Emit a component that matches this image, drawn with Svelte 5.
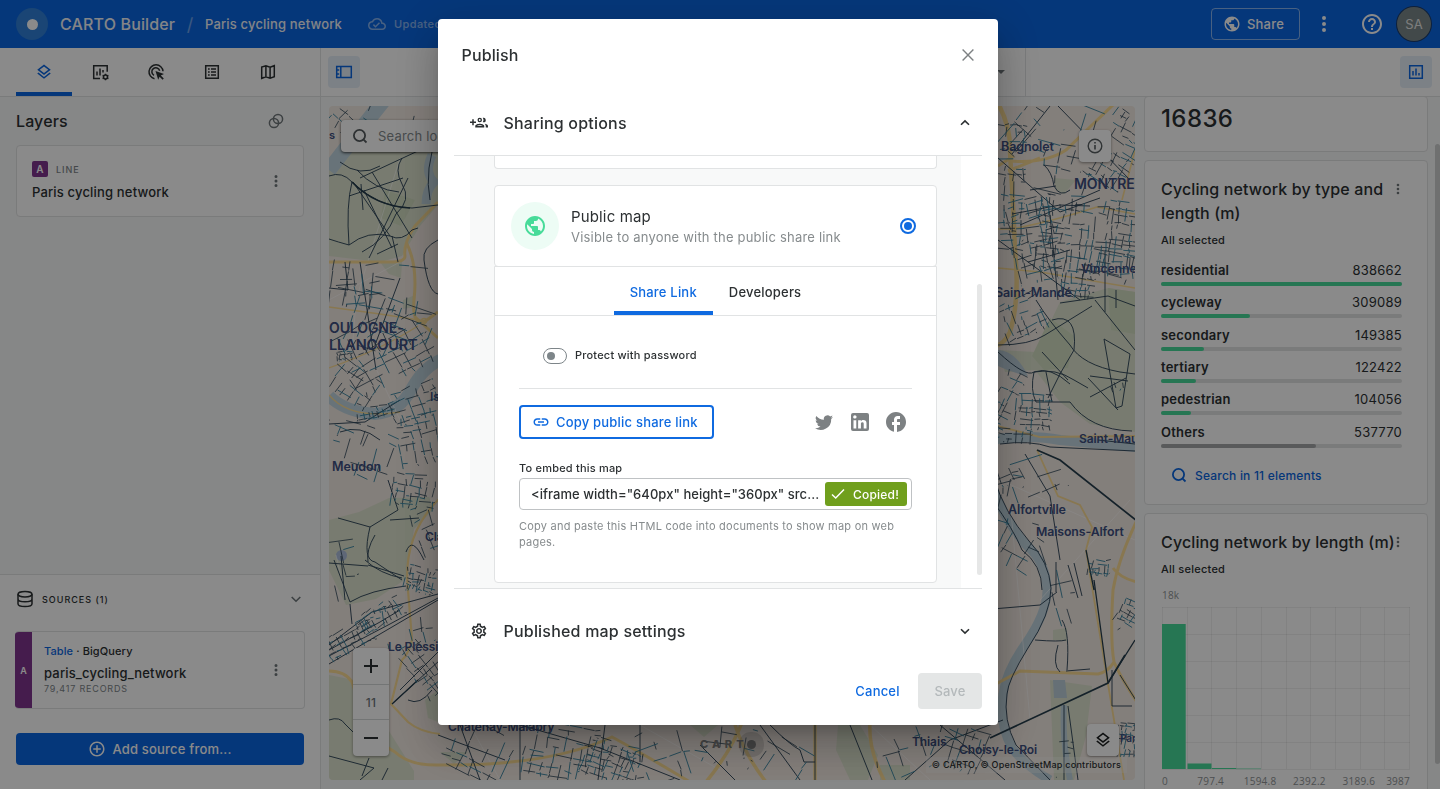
<script>
  const tabs = ['layers', 'widgets', 'interactions', 'legend', 'basemaps'];

  const categories = [
    { name: 'residential', value: 838662, share: 100 },
    { name: 'cycleway', value: 309089, share: 36.9 },
    { name: 'secondary', value: 149385, share: 17.8 },
    { name: 'tertiary', value: 122422, share: 14.6 },
    { name: 'pedestrian', value: 104056, share: 12.4 },
    { name: 'Others', value: 537770, share: 64.2, other: true }
  ];

  const axis = ['0', '797.4', '1594.8', '2392.2', '3189.6', '3987'];

  // Deterministic pseudo-random source so the street texture is stable.
  let seed = 7321;
  function rnd() {
    seed = (seed * 16807) % 2147483647;
    return seed / 2147483647;
  }

  let dark = '';
  let teal = '';

  // A rotated block of streets: [centre x, centre y, width, height, angle, step, density]
  function block([cx, cy, w, h, deg, step, density]) {
    const a = (deg * Math.PI) / 180;
    const ca = Math.cos(a);
    const sa = Math.sin(a);
    const p = (x, y) => `${(cx + x * ca - y * sa).toFixed(1)} ${(cy + x * sa + y * ca).toFixed(1)}`;
    for (const flip of [false, true]) {
      const W = flip ? h : w;
      const H = flip ? w : h;
      for (let x = -W / 2; x <= W / 2; x += step * (0.6 + rnd() * 0.8)) {
        let y = -H / 2 + rnd() * step;
        while (y < H / 2) {
          const len = step * (0.5 + rnd() * 1.9);
          const end = Math.min(y + len, H / 2);
          if (rnd() < density) {
            const bend = (rnd() - 0.5) * 3.2;
            const seg = flip ? `M${p(y, x)}L${p(end, x + bend)}` : `M${p(x, y)}L${p(x + bend, end)}`;
            if (rnd() < 0.58) dark += seg;
            else teal += seg;
          }
          y = end + rnd() * step * 0.25;
        }
      }
    }
  }

  [
    [348, 122, 34, 26, 40, 7, 0.6], [400, 112, 60, 14, 15, 9, 0.4],
    [383, 287, 104, 48, 8, 12, 0.5], [358, 286, 44, 40, -4, 9, 0.45], [385, 350, 90, 66, -28, 10, 0.6], [352, 383, 50, 34, 35, 8, 0.6],
    [345, 356, 16, 9, -6, 3, 0.7], [390, 330, 80, 60, 20, 15, 0.5],
    [376, 412, 38, 12, -10, 5, 0.7], [415, 404, 50, 34, -20, 8, 0.65], [350, 430, 46, 20, 20, 12, 0.5], [362, 452, 62, 50, 18, 12, 0.5],
    [420, 440, 44, 50, -12, 8, 0.65], [414, 492, 44, 34, 8, 5.5, 0.7], [428, 530, 24, 50, -20, 8, 0.5], [421, 580, 32, 26, 12, 4.5, 0.6],
    [380, 616, 50, 20, -30, 5, 0.65], [350, 640, 50, 24, -28, 6, 0.6], [424, 668, 28, 60, -38, 7, 0.65],
    [345, 570, 26, 60, -10, 15, 0.3], [410, 625, 50, 40, -10, 12, 0.4],
    [1020, 122, 60, 36, -50, 14, 0.45], [1010, 190, 30, 130, 2, 7, 0.6], [1118, 150, 42, 76, 30, 7, 0.68], [1080, 120, 70, 30, 20, 16, 0.4],
    [1062, 170, 60, 50, 12, 12, 0.45], [1088, 236, 100, 76, 6, 6.5, 0.62], [1100, 265, 70, 30, 10, 9, 0.6], [1036, 240, 48, 84, -12, 7, 0.6],
    [1078, 285, 34, 26, 7, 5.5, 0.7], [1022, 318, 44, 40, -25, 7, 0.68], [1034, 412, 36, 36, 2, 6, 0.7],
    [1006, 400, 20, 60, 25, 6, 0.65], [1012, 436, 40, 14, 5, 7, 0.65], [1020, 545, 40, 50, 28, 10, 0.5],
    [1060, 580, 22, 90, -15, 12, 0.4], [1099, 568, 22, 16, 5, 4, 0.6], [1128, 615, 20, 36, 30, 5, 0.65],
    [1127, 740, 18, 34, 2, 4.5, 0.65], [1008, 476, 18, 26, 70, 7, 0.6], [1040, 475, 60, 40, -20, 16, 0.3],
    [1010, 500, 20, 50, 15, 8, 0.45], [1118, 386, 14, 10, -20, 3.5, 0.5],
    [560, 752, 70, 56, 12, 8, 0.65], [612, 762, 56, 40, 18, 5.5, 0.65], [660, 756, 60, 52, -18, 12, 0.5],
    [480, 752, 70, 52, 25, 11, 0.5], [725, 745, 60, 40, 10, 12, 0.4], [782, 752, 60, 50, 30, 13, 0.4],
    [900, 752, 50, 50, -20, 12, 0.5], [960, 748, 50, 44, 20, 9, 0.6], [1065, 760, 16, 36, 2, 8, 0.35]
  ].forEach(block);

  const places = [
    [329, 139, 's', 11], [329, 333, 'OULOGNE-', 14], [329, 350, 'LLANCOURT', 14.5], [332, 471, 'Meudon', 12.5],
    [425, 541, 'Clamart', 12], [388, 651, 'Le Plessis', 12], [430, 401, 'Issy', 12], [448, 731, 'Châtenay-Malabry', 12],
    [912, 746, 'Thiais', 12], [959, 754, 'Choisy-le-Roi', 12], [1001, 151, 'Bagnolet', 12.500], [1074, 189, 'MONTRE', 14],
    [1081, 273, 'Vincenne', 12.3], [995, 297, 'Saint-Mandé', 12.500], [1079, 443, 'Saint-Mau', 12],
    [1008, 514, 'Alfortville', 12.500], [1036, 536, 'Maisons-Alfort', 12.300], [1120, 742, 'Par', 10]
  ];
</script>

{#snippet dots(size = 18)}
  <svg class="ic" width={size} height={size} viewBox="0 0 24 24"><path d="M12 8a2 2 0 1 0 0-4 2 2 0 0 0 0 4zm0 2a2 2 0 1 0 0 4 2 2 0 0 0 0-4zm0 6a2 2 0 1 0 0 4 2 2 0 0 0 0-4z" /></svg>
{/snippet}

{#snippet globe(size)}
  <svg class="ic" width={size} height={size} viewBox="0 0 24 24"><path d="M12 2C6.48 2 2 6.48 2 12s4.48 10 10 10 10-4.48 10-10S17.52 2 12 2zm-1 17.93c-3.95-.49-7-3.85-7-7.93 0-.62.08-1.21.21-1.79L9 15v1c0 1.1.9 2 2 2v1.930zm6.900-2.540c-.26-.81-1-1.390-1.900-1.390h-1v-3c0-.55-.45-1-1-1H8v-2h2c.55 0 1-.45 1-1V7h2c1.100 0 2-.9 2-2v-.41c2.930 1.190 5 4.060 5 7.410 0 2.080-.8 3.970-2.100 5.390z" /></svg>
{/snippet}

{#snippet search(size)}
  <svg class="ic line" width={size} height={size} viewBox="0 0 18 18" stroke-width="1.800"><circle cx="8.500" cy="8.500" r="5.600" /><path d="M12.600 12.600 15.500 15.500" /></svg>
{/snippet}

{#snippet layersIcon(size)}
  <svg class="ic" width={size} height={size} viewBox="0 0 24 24"><path d="m11.990 18.540-7.370-5.730L3 14.070l9 7 9-7-1.630-1.270-7.380 5.740zM12 16l7.360-5.730L21 9l-9-7-9 7 1.630 1.270L12 16zm0-11.470L17.740 9 12 13.470 6.260 9 12 4.530z" /></svg>
{/snippet}

<div class="app">
  <header class="top">
    <div class="logo"><i></i></div>
    <span class="product">CARTO Builder</span>
    <span class="slash">/</span>
    <span class="doc">Paris cycling network</span>
    <span class="saved">
      <svg class="ic" width="18" height="18" viewBox="0 0 24 24"><path d="M19.350 10.040A7.490 7.490 0 0 0 12 4C9.110 4 6.600 5.640 5.350 8.040A5.994 5.994 0 0 0 0 14c0 3.310 2.690 6 6 6h13c2.760 0 5-2.240 5-5 0-2.640-2.050-4.780-4.650-4.960zM19 18H6c-2.210 0-4-1.790-4-4 0-2.050 1.530-3.760 3.560-3.970l1.070-.11.5-.95A5.469 5.469 0 0 1 12 6c2.620 0 4.880 1.860 5.390 4.430l.3 1.500 1.530.11A2.980 2.980 0 0 1 22 15c0 1.650-1.350 3-3 3zm-9-3.820-2.090-2.090L6.500 13.500 10 17l6.010-6.010-1.410-1.410z" /></svg>
      Updated just now
    </span>
    <div class="right">
      <button class="share">{@render globe(18)}Share</button>
      <span class="more">{@render dots(24)}</span>
      <svg class="ic help" width="24" height="24" viewBox="0 0 24 24"><path d="M11 18h2v-2h-2v2zm1-16C6.480 2 2 6.480 2 12s4.480 10 10 10 10-4.480 10-10S17.520 2 12 2zm0 18c-4.410 0-8-3.590-8-8s3.590-8 8-8 8 3.590 8 8-3.590 8-8 8zm0-14c-2.210 0-4 1.790-4 4h2c0-1.100.9-2 2-2s2 .9 2 2c0 2-3 1.750-3 5h2c0-2.250 3-2.500 3-5 0-2.210-1.790-4-4-4z" /></svg>
      <span class="avatar">SA</span>
    </div>
  </header>

  <div class="body">
    <aside class="side">
      <nav>
        {#each tabs as tab, i}
          <span class="tab" class:active={i === 0}>
            {#if tab === 'layers'}
              {@render layersIcon(18)}
            {:else if tab === 'widgets'}
              <svg class="ic line" width="18" height="18" viewBox="0 0 18 18" stroke-width="1.500"><path d="M9 15.500H2.700V2.700h13.500v6M6 8.500v4M9 5.500v7M12 7v2.500" /><circle cx="14.500" cy="14" r="2" /><path d="M14.500 10.700v1.300M14.500 16v1.300M11.600 12.400l1.200.6M16.200 15l1.200.6M11.600 15.600l1.200-.6M16.200 13l1.200-.6" stroke-width="1.400" /></svg>
            {:else if tab === 'interactions'}
              <svg class="ic line" width="18" height="18" viewBox="0 0 18 18" stroke-width="1.500"><path d="M7.500 15.700A7 7 0 1 1 16 8.300M7 12.300A4 4 0 1 1 12.700 7.700" /><path d="M8.500 8l8.500 3-3.200 1.500 3 3-1.200 1.200-3-3-1.400 3z" fill="currentColor" stroke="none" /></svg>
            {:else if tab === 'legend'}
              <svg class="ic line" width="18" height="18" viewBox="0 0 18 18" stroke-width="1.500"><path d="M2.700 2.700h12.600v12.600H2.700zM5 6h1.700M8 6h5M5 9h1.700M8 9h5M5 12h1.700M8 12h5" /></svg>
            {:else}
              <svg class="ic line" width="18" height="18" viewBox="0 0 18 18" stroke-width="1.500"><path d="M2.700 4v11.300l4.200-1.600 4.200 1.600 4.200-1.600V2.700l-4.200 1.600-4.200-1.600zM6.900 2.700v11M11.100 4.300v11" /></svg>
            {/if}
          </span>
        {/each}
      </nav>

      <div class="layers">
        <div class="heading">
          <h2>Layers</h2>
          <svg class="ic line" width="18" height="18" viewBox="0 0 18 18" stroke-width="1.500"><circle cx="11" cy="7" r="4.600" /><circle cx="7" cy="11" r="4.600" /></svg>
        </div>
        <div class="layer card">
          <div>
            <div class="kind"><b>A</b><span>LINE</span></div>
            <div class="name">Paris cycling network</div>
          </div>
          {@render dots()}
        </div>
      </div>

      <div class="sources">
        <div class="srchead">
          <svg class="ic line" width="18" height="18" viewBox="0 0 18 18" stroke-width="1.500"><ellipse cx="9" cy="4.200" rx="7" ry="2.700" /><path d="M2 4.200v9.600c0 1.600 3 2.800 7 2.800s7-1.200 7-2.800V4.200M2 9c0 1.600 3 2.800 7 2.800S16 10.600 16 9" /></svg>
          <span>SOURCES (1)</span>
          <svg class="ic line" width="18" height="18" viewBox="0 0 18 18" stroke-width="1.600"><path d="M4.700 7 9 11.200 13.300 7" /></svg>
        </div>
        <div class="source card">
          <b>A</b>
          <div>
            <div class="origin"><em>Table</em> · BigQuery</div>
            <div class="name">paris_cycling_network</div>
            <div class="records">79,417 RECORDS</div>
          </div>
          {@render dots()}
        </div>
        <button class="add">
          <svg class="ic" width="18" height="18" viewBox="0 0 24 24"><path d="M13 7h-2v4H7v2h4v4h2v-4h4v-2h-4V7zm-1-5C6.480 2 2 6.480 2 12s4.480 10 10 10 10-4.480 10-10S17.520 2 12 2zm0 18c-4.410 0-8-3.590-8-8s3.590-8 8-8 8 3.590 8 8-3.590 8-8 8z" /></svg>
          Add source from...
        </button>
      </div>
    </aside>

    <main>
      <div class="toolbar">
        <span class="tool"><svg class="ic line" width="18" height="18" viewBox="0 0 18 18" stroke-width="1.500"><path d="M1.700 3.500h14.600v11H1.700zM5.800 3.500v11M1.700 7h2.500M1.700 11h2.500" /></svg></span>
        <span class="picker"><i></i></span>
        <span class="tool end"><svg class="ic line" width="18" height="18" viewBox="0 0 18 18" stroke-width="1.500"><path d="M2.700 2.700h12.600v12.600H2.700zM6 8v4.500M9 5.500v7M12 10v2.500" /></svg></span>
      </div>

      <div class="work">
        <div class="map">
          <svg class="tiles" viewBox="329 106 806 674" width="806" height="674">
            <rect x="329" y="106" width="806" height="674" fill="#f3eae3" />
            <g fill="#dee4cf">
              <path d="M329 165 360 140 438 128V205L420 226 402 256 380 262 329 256z" />
              <path d="M380 262l22 0-1 16-12-4zM329 520l30-8 30-14 40-1 5 12-20 20-8 50-30 20-30 6-22-45-25 5zM329 675l30 6 30 50 25 40v9h-85z" />
              <path d="M1108 288 1135 292V432L1090 424 1060 402 1035 370 1005 372 998 350 1036 352 1060 302z" />
              <path d="M1054 178l22 2-12 14-8-4zM1053 630l14-2v13l-14-1zM1050 680l42 6-6 50-12 44h-20zM838 725h22l18 30-10 25h-18l-14-30zM440 752l28 0-14 12zM690 725l28 0-14 12zM880 765h30v15h-30z" />
              <path d="M425 700l13-10v32l-10-4zM403 300l12-5v12l-12 2z" />
            </g>
            <path d="M1050 318l24 18-6 32-24 2-12-14zM1108 288l27 4v42l-24-4zM385 190l30 10-14 26-20-8z" fill="#d3dec2" />
            <g fill="none" stroke="#c0d5df">
              <path d="M329 170Q352 140 384 100" stroke-width="15" />
              <path d="M329 396Q345 412 375 414Q400 412 412 388Q425 365 445 358" stroke-width="12" />
              <path d="M432 155Q424 172 434 182Q426 190 426 204" stroke-width="9" />
              <path d="M990 440Q1030 434 1060 440L1135 447" stroke-width="10" />
              <path d="M990 478Q1000 515 1026 545Q1046 562 1047 588Q1048 612 1024 646Q1006 672 1003 694Q998 722 1012 748Q1024 765 1050 780" stroke-width="9" />
              <path d="M1064 705Q1062 740 1070 780" stroke-width="6" />
            </g>
            <path d="M998 350Q1015 350 1028 376Q1010 372 998 366zM1053 680h12l2 18h-13z" fill="#bccfdb" />
            <circle cx="341.500" cy="555.500" r="5.500" fill="#aebfdd" />
            <g fill="none" stroke="#fff" opacity=".55" stroke-width="1">
              <path d="M400 158 369 258 356 300 350 380M329 300 400 262M1000 480 1135 540M1040 600 1130 500M1010 500 1030 720M336 555 346 598M372 360 400 420M470 725 500 780M870 725 930 780M640 725 720 770" />
            </g>
            <g fill="none" stroke="#fbdc94" stroke-width="3">
              <path d="M996 100Q1011 125 1010 152Q1014 220 1015 250Q1020 300 1010 332Q1004 344 996 346" stroke-width="4.500" />
              <path d="M1114 104 1092 125 1066 150Q1045 164 1010 161M998 166 1014 156M1008 171 1040 158" />
              <path d="M329 262H390Q405 262 405 256Q403 244 415 226L438 202" />
              <path d="M406 242Q418 265 414 300Q412 325 424 322L438 312M414 316 438 338" />
              <path d="M329 307 380 314 425 321M329 368Q380 350 418 326M329 395Q350 420 400 412" stroke-width="1.300" />
              <path d="M440 498Q402 535 408 590L412 640Q408 655 402 660L391 704 408 722Q420 732 440 734" stroke-width="2.200" />
              <path d="M329 671Q345 671 352 682Q370 740 395 752Q410 766 440 765Q550 766 612 737Q640 752 690 782" />
              <path d="M743 720Q732 750 706 782M735 725Q745 755 766 782M815 722V782M870 722Q868 750 885 782" stroke-width="3.500" />
              <path d="M998 229H1012Q1050 222 1097 207L1135 214M998 268 1040 272 1135 288M1135 150 1122 200" stroke-width="1.600" />
              <path d="M1137 520Q1118 560 1113 590Q1110 640 1114 662Q1122 680 1137 702M1113 568Q1120 578 1137 582M996 684 1020 671 1098 674Q1108 672 1114 662" />
              <path d="M990 424 1040 437 1135 436M1037 450 1058 496 1080 505 1092 527 1086 550 1108 684 1124 780" stroke-width="1.800" />
              <circle cx="1012.500" cy="229" r="3" stroke-width="1.300" />
              <circle cx="424" cy="321" r="2.500" stroke-width="1.300" />
            </g>
            <g fill="none" stroke="#2f4658" stroke-width=".95">
              <path d="M329 176Q342 171 352 182Q346 205 349 245Q338 242 329 239M352 182Q378 208 412 208L438 205M349 245Q368 230 390 236Q402 242 412 230L418 228M369 258 408 178M353 182 390 236M364 190 392 248M349 196 403 178M402 158Q394 170 402 184Q412 200 396 214Q386 240 362 252M357 170Q375 190 399 192M340 162Q360 178 380 166M372 172 412 238M360 178 420 150M377 254 398 244M361 184 363 210M392 236 398 262" />
              <path d="M438 240Q422 248 424 260Q428 292 438 294M438 132Q424 170 430 200M400 278 375 345M329 288 348 290 345 262M360 262 376 370M329 424 365 422 400 400M340 432Q360 424 380 440" />
              <path d="M338 518 370 527 398 510 388 480M370 527Q362 560 375 562L402 580M368 565 404 576M350 602Q370 590 406 586M334 560 350 602M341 556 345 600M406 552Q412 535 424 560M375 535Q366 550 368 562M365 560Q380 574 402 578M329 563 368 566M390 520 419 518M350 604 352 624" />
              <path d="M329 645 372 612 438 594M329 650 380 622 400 610M329 656 390 624 438 598M329 664 438 600M392 704 440 660M329 720Q340 716 345 724L356 735M329 756 374 768 360 780M369 758 362 776M388 768 382 780M400 690 438 652M408 700Q420 706 432 690" />
              <path d="M1012 154 1050 106M998 158 1060 212 1100 198M1044 165Q1052 172 1054 186Q1060 198 1070 190M1012 214 1060 205 1090 206M1030 190 1056 186M1058 106 1130 180M1095 300 1135 350M1060 303 1108 296 1135 306M1105 250V312M1116 290V308M1020 225 1100 190M1050 215 1058 300M998 240 1080 300M1028 262 1070 250" />
              <path d="M1036 300Q1048 320 1070 345Q1082 365 1120 372L1135 374M998 345Q1030 345 1045 335L1092 306M1052 320Q1078 312 1074 350Q1060 372 1048 398M1042 352 1068 380M1104 339 1130 354 1122 406 1116 408 1104 339M1088 378 1118 410M1090 376 1128 381M1090 397 1126 378M1034 372Q1030 390 1036 402L1070 402Q1090 430 1132 431M1046 372 1052 402M1034 372Q1050 366 1070 384M998 352Q1026 378 1034 372Q1056 368 1074 380L1088 388" />
              <path d="M994 478Q1004 512 1029 541Q1049 562 1051 588Q1051 614 1028 648Q1008 680 1007 694Q1003 720 1016 745L1050 780M992 500Q1014 530 1022 550Q1042 565 1042 590M992 609 1040 605 1057 592M1056 562V592M1062 620Q1070 632 1067 670M1035 640Q1060 642 1066 640M1066 671 1090 669M1058 645Q1052 665 1060 672M1064 705V780M1068 706 1078 780M1025 454 1050 496 1060 560M1112 670V706L1132 706M1120 675 1137 702M1068 565 1078 598M1074 563 1082 596M1098 440 1135 444M1000 444Q1030 440 1050 447L1135 451" />
              <path d="M520 725 600 748 680 780M605 725 598 780M520 725V780M460 725 480 780M438 735 505 760M640 725V762M700 745 735 780M760 725 800 780M850 725 872 780M905 780 950 740 1003 720M770 725Q790 745 800 750L804 762H815M815 725V780M940 725 1005 780" />
            </g>
            <g fill="none" stroke="#263e4d" stroke-width="1.700">
              <path d="M1037 450 1060 460 1137 521M990 738 1108 683 1125 655M352 182Q375 206 410 208" />
              <path d="M1135 640 1108 683M392 704 418 680M1094 580 1108 683M1086 550 1094 590" stroke-width="1.300" />
            </g>
            <path d={dark} fill="none" stroke="#2f4658" stroke-width=".8" />
            <path d={teal} fill="none" stroke="#33819f" stroke-width=".9" />
            <g class="places">
              {#each places as [x, y, label, size]}
                <text {x} {y} font-size={size}>{label}</text>
              {/each}
            </g>
          </svg>

          <div class="find">{@render search(18)}Search location</div>
          <div class="info"><svg class="ic line" width="18" height="18" viewBox="0 0 18 18" stroke-width="1.400"><circle cx="9" cy="9" r="6.800" /><path d="M9 8v4.500M9 5v1.600" stroke-width="1.600" /></svg></div>
          <div class="zoom">
            <span><svg class="ic line" width="18" height="18" viewBox="0 0 18 18" stroke-width="2"><path d="M2 9h14M9 2v14" /></svg></span>
            <span class="level">11</span>
            <span><svg class="ic line" width="18" height="18" viewBox="0 0 18 18" stroke-width="2"><path d="M2 9h14" /></svg></span>
          </div>
          <div class="brand">CART<i></i></div>
          <div class="switch">{@render layersIcon(18)}</div>
          <div class="credit">© CARTO, © OpenStreetMap contributors</div>
        </div>

        <div class="widgets">
          <section class="card total">16836</section>
          <section class="card cats">
            <div class="wtitle"><h2>Cycling network by type and length (m)</h2>{@render dots(16)}</div>
            <p>All selected</p>
            {#each categories as c}
              <div class="cat" class:other={c.other}>
                <div><b>{c.name}</b><span>{c.value}</span></div>
                <div class="track"><i style="width: {c.share}%"></i></div>
              </div>
            {/each}
            <div class="searchin">{@render search(18)}Search in 11 elements</div>
          </section>
          <section class="card hist">
            <div class="wtitle"><h2>Cycling network by length (m)</h2>{@render dots(16)}</div>
            <p>All selected</p>
            <div class="max">18k</div>
            <svg width="249" height="163" viewBox="0 0 249 163">
              <g stroke="#000" stroke-opacity=".06" fill="none">
                {#each Array(11) as _, i}<path d="M{Math.round(i * 24.7) + 0.5} 0V162" />{/each}
                {#each Array(7) as _, i}<path d="M0 {i * 27 + 0.5}H248" />{/each}
              </g>
              <g fill="#47db99">
                <rect x="0" y="17" width="23.700" height="145" />
                <rect x="25.500" y="156.500" width="24" height="5.500" />
                <rect x="50" y="161" width="24" height="1" />
                <rect x="74" y="161.600" width="25" height=".5" />
              </g>
            </svg>
            <div class="axis">{#each axis as a}<span>{a}</span>{/each}</div>
          </section>
        </div>
        <div class="scroll"></div>
      </div>
    </main>
  </div>
</div>

<div class="overlay">
  <div class="dialog">
    <div class="dtitle">
      <h1>Publish</h1>
      <svg class="ic line" width="24" height="24" viewBox="0 0 24 24" stroke-width="1.400"><path d="M6.600 6.600 17.400 17.400M17.400 6.600 6.600 17.400" /></svg>
    </div>

    <div class="acc first">
      <svg class="ic" width="18" height="18" viewBox="0 0 24 24"><path fill-rule="evenodd" d="M8 10H5V7H3v3H0v2h3v3h2v-3h3v-2zM13 11a3 3 0 1 0 0-6 3 3 0 0 0 0 6zm0-4.200a1.200 1.200 0 1 1 0 2.400 1.200 1.200 0 0 1 0-2.400zM13 13c-2 0-6 1-6 3v2h12v-2c0-2-4-3-6-3zm-3.900 3.100c.7-.6 2.400-1.200 3.900-1.200s3.200.6 3.900 1.200zM18 11a3 3 0 1 0-.91-5.860 5 5 0 0 1 0 5.720c.29.09.59.14.91.14zM19.620 13.160c.83.73 1.380 1.660 1.380 2.840v2h3v-2c0-1.540-2.370-2.490-4.380-2.840z" /></svg>
      <h3>Sharing options</h3>
      <svg class="ic line" width="18" height="18" viewBox="0 0 18 18" stroke-width="1.600"><path d="M5 10.800 9 6.900 13 10.800" /></svg>
    </div>

    <div class="scroller">
      <div class="content">
        <div class="prev"></div>
        <div class="option">
          <span class="bubble">{@render globe(24)}</span>
          <div>
            <strong>Public map</strong>
            <small>Visible to anyone with the public share link</small>
          </div>
          <span class="radio"><i></i></span>
        </div>
        <div class="panel">
          <div class="ptabs"><span class="on">Share Link</span><span>Developers</span></div>
          <div class="pbody">
            <div class="protect"><span class="toggle"><i></i></span><span>Protect with password</span></div>
            <div class="actions">
              <button class="copy">
                <svg class="ic" width="18" height="18" viewBox="0 0 24 24"><path d="M3.900 12c0-1.710 1.390-3.100 3.100-3.100h4V7H7c-2.760 0-5 2.240-5 5s2.240 5 5 5h4v-1.900H7c-1.710 0-3.100-1.390-3.100-3.100zM8 13h8v-2H8v2zm9-6h-4v1.900h4c1.710 0 3.100 1.390 3.100 3.100s-1.390 3.100-3.100 3.100h-4V17h4c2.760 0 5-2.240 5-5s-2.240-5-5-5z" /></svg>
                Copy public share link
              </button>
              <div class="social">
                <svg class="ic" width="24" height="24" viewBox="0 0 24 24"><path d="M21 5.900a7.400 7.400 0 0 1-2.100.6 3.700 3.700 0 0 0 1.600-2 7.500 7.500 0 0 1-2.300.9 3.700 3.700 0 0 0-6.300 3.400A10.500 10.500 0 0 1 4.300 4.900a3.700 3.700 0 0 0 1.100 4.900 3.700 3.700 0 0 1-1.700-.5c0 1.800 1.300 3.400 3 3.700a3.700 3.700 0 0 1-1.700.1 3.700 3.700 0 0 0 3.500 2.500A7.500 7.500 0 0 1 3 17.200 10.500 10.500 0 0 0 19.200 7.900 7.500 7.500 0 0 0 21 5.900z" transform="translate(0 1)" /></svg>
                <svg class="ic" width="24" height="24" viewBox="0 0 24 24"><path d="M19 3a2 2 0 0 1 2 2v14a2 2 0 0 1-2 2H5a2 2 0 0 1-2-2V5a2 2 0 0 1 2-2h14m-.500 15.500v-5.300a3.260 3.260 0 0 0-3.260-3.260c-.85 0-1.840.52-2.320 1.300v-1.110h-2.790v8.370h2.790v-4.930c0-.77.62-1.400 1.390-1.400a1.400 1.400 0 0 1 1.400 1.400v4.930h2.790M6.880 8.560a1.680 1.680 0 0 0 1.680-1.680c0-.93-.75-1.690-1.680-1.690a1.690 1.690 0 0 0-1.690 1.690c0 .93.76 1.680 1.690 1.680m1.390 9.940v-8.370H5.500v8.370h2.770z" /></svg>
                <svg class="ic" width="24" height="24" viewBox="0 0 24 24"><path d="M22 12c0-5.520-4.480-10-10-10S2 6.480 2 12c0 4.840 3.440 8.870 8 9.800V15H8v-3h2V9.500C10 7.570 11.570 6 13.500 6H16v3h-2c-.55 0-1 .45-1 1v2h3v3h-3v6.950c5.050-.5 9-4.760 9-9.950z" /></svg>
              </div>
            </div>
            <label for="embed">To embed this map</label>
            <div class="input" id="embed">
              <span>&lt;iframe width="640px" height="360px" src...</span>
              <b><svg class="ic line" width="18" height="18" viewBox="0 0 18 18" stroke-width="1.500"><path d="M3 9.500 6.700 13 15 4.500" /></svg>Copied!</b>
            </div>
            <p>Copy and paste this HTML code into documents to show map on web pages.</p>
          </div>
        </div>
      </div>
      <i class="thumb"></i>
    </div>

    <div class="acc second">
      <svg class="ic" width="18" height="18" viewBox="0 0 24 24"><path d="M19.430 12.980c.04-.32.07-.64.07-.98 0-.34-.03-.66-.07-.98l2.110-1.650c.19-.15.24-.42.12-.64l-2-3.460a.5.5 0 0 0-.61-.22l-2.490 1c-.52-.4-1.080-.73-1.690-.98l-.38-2.650A.488.488 0 0 0 14 2h-4c-.25 0-.46.18-.49.42l-.38 2.650c-.61.25-1.170.59-1.690.98l-2.490-1a.5.5 0 0 0-.61.22l-2 3.460c-.13.22-.07.49.12.64l2.110 1.650c-.04.32-.07.65-.07.98 0 .33.03.66.07.98l-2.110 1.650c-.19.15-.24.42-.12.64l2 3.460c.12.22.39.3.61.22l2.490-1c.52.4 1.080.73 1.690.98l.38 2.650c.03.24.24.42.49.42h4c.25 0 .46-.18.49-.42l.38-2.650c.61-.25 1.170-.59 1.690-.98l2.490 1c.23.09.49 0 .61-.22l2-3.460c.12-.22.07-.49-.12-.64l-2.110-1.650zm-1.980-1.710c.04.31.05.52.05.73 0 .21-.02.43-.05.73l-.14 1.130.89.7 1.080.84-.7 1.210-1.270-.51-1.040-.42-.9.68c-.43.32-.84.56-1.250.73l-1.060.43-.16 1.130-.2 1.350h-1.400l-.19-1.350-.16-1.130-1.060-.43c-.43-.18-.83-.41-1.230-.71l-.91-.7-1.060.43-1.270.51-.7-1.210 1.080-.84.89-.7-.14-1.130c-.03-.31-.05-.54-.05-.74s.02-.43.05-.73l.14-1.130-.89-.7-1.080-.84.7-1.210 1.270.51 1.040.42.9-.68c.43-.32.84-.56 1.250-.73l1.060-.43.16-1.130.2-1.350h1.390l.19 1.350.16 1.130 1.060.43c.43.18.83.41 1.230.71l.91.7 1.060-.43 1.270-.51.7 1.210-1.070.85-.89.7.14 1.130zM12 8c-2.210 0-4 1.790-4 4s1.790 4 4 4 4-1.790 4-4-1.790-4-4-4zm0 6c-1.100 0-2-.9-2-2s.9-2 2-2 2 .9 2 2-.9 2-2 2z" /></svg>
      <h3>Published map settings</h3>
      <svg class="ic line" width="18" height="18" viewBox="0 0 18 18" stroke-width="1.600"><path d="M5 7.200 9 11.100 13 7.200" /></svg>
    </div>

    <div class="foot"><button class="cancel">Cancel</button><button class="save">Save</button></div>
  </div>
</div>

<style>
  :global(body) { overflow: hidden; }
  * { box-sizing: border-box; }
  .app, .overlay { font-family: Inter, 'Open Sans', sans-serif; color: #2c3032; letter-spacing: 0.2px; }
  .app { width: 1440px; height: 789px; display: flex; flex-direction: column; background: #f8f9f9; overflow: hidden; }
  h1, h2, h3, p { margin: 0; font-weight: 500; }
  h1, h2, h3 { font-size: 16px; line-height: 24px; letter-spacing: 0.12px; }
  button { font: inherit; letter-spacing: inherit; border: 0; padding: 0; margin: 0; }
  .ic { display: block; flex: none; fill: currentColor; }
  .line { fill: none; stroke: currentColor; }
  .card { background: #fff; border: 1px solid #e1e3e4; border-radius: 4px; }

  .top { height: 48px; flex: none; background: #0b66e1; color: #fff; display: flex; align-items: center; padding: 0 9px 0 16px; }
  .logo { width: 32px; height: 32px; border-radius: 50%; background: #3080d8; display: grid; place-items: center; margin-right: 12px; }
  .logo i { width: 11px; height: 11px; border-radius: 50%; background: #fff; }
  .product { font-size: 16px; font-weight: 500; letter-spacing: 0.15px; width: 115px; white-space: nowrap; color: #f2f5fa; }
  .slash { font-size: 18px; opacity: 0.4; width: 30px; text-align: center; }
  .doc { font-size: 13px; font-weight: 500; width: 137px; white-space: nowrap; letter-spacing: 0.17px; color: #f2f5fa; }
  .saved { display: flex; align-items: center; gap: 8px; margin-left: 26px; font-size: 11px; font-weight: 500; opacity: 0.5; letter-spacing: 0.4px; }
  .right { margin-left: auto; display: flex; align-items: center; }
  .share { width: 89px; height: 32px; border: 1px solid rgba(255, 255, 255, 0.5); border-radius: 4px; background: none; color: #fff; display: flex; align-items: center; padding-left: 11px; gap: 6px; font-size: 13px; font-weight: 500; }
  .more { margin: 0 24px 0 12px; }
  .avatar { width: 34px; height: 34px; margin-left: 13px; border-radius: 50%; background: #7b8889; box-shadow: 0 0 0 1px #1b3c6c; display: grid; place-items: center; font-size: 13px; letter-spacing: 0; color: #e8e8e8; }

  .body { flex: 1; display: flex; min-height: 0; }
  .side { width: 321px; flex: none; border-right: 1px solid #e1e3e4; display: flex; flex-direction: column; }
  nav { height: 49px; flex: none; border-bottom: 1px solid #e1e3e4; background: #fff; display: flex; padding-left: 16px; }
  .tab { width: 56px; height: 48px; display: grid; place-items: center; border-bottom: 4px solid transparent; padding-top: 4px; }
  .tab.active { color: #0b66e1; border-color: #0b66e1; }
  .layers { flex: 1; padding: 12px 16px; }
  .heading { display: flex; align-items: center; justify-content: space-between; padding-right: 19px; height: 24px; margin-bottom: 12px; }
  .heading .ic, .card > .ic, .wtitle .ic, .srchead .ic:last-child { color: #6f777b; }
  .layer { height: 72px; display: flex; align-items: center; justify-content: space-between; padding: 0 18px 0 15px; }
  .kind { display: flex; align-items: center; gap: 8px; font-size: 9px; letter-spacing: 1px; color: #7d8589; font-weight: 500; margin-bottom: 6px; }
  .kind b { width: 16px; height: 16px; background: #80358f; border-radius: 2px; color: #fff; font-size: 10px; display: grid; place-items: center; letter-spacing: 0; font-weight: 600; }
  .name { font-size: 13px; line-height: 18px; font-weight: 500; letter-spacing: 0.17px; }
  .sources { height: 215px; flex: none; border-top: 1px solid #e1e3e4; background: #fff; padding: 0 16px; }
  .srchead { height: 48px; display: flex; align-items: center; font-size: 9px; letter-spacing: 1px; font-weight: 500; margin-bottom: 8px; }
  .srchead span { flex: 1; margin-left: 8px; }
  .srchead .ic:last-child { margin-right: -1px; }
  .source { height: 78px; display: flex; align-items: center; overflow: hidden; padding-right: 19px; margin: 0 -1px 24px -1px; border-left: 0; }
  .source b { width: 17px; height: 100%; background: #80358f; color: #fff; display: grid; place-items: center; font-size: 9px; font-weight: 600; }
  .source > div { flex: 1; margin: -4px 0 0 12px; }
  .origin { font-size: 11px; line-height: 18px; font-weight: 500; white-space: nowrap; letter-spacing: 0.1px; }
  .origin em { color: #0b66e1; font-style: normal; }
  .source .name { line-height: 22px; margin-top: 2px; }
  .records { font-size: 9px; line-height: 10px; color: #7d8589; letter-spacing: 0.8px; }
  .add { width: 288px; height: 32px; border-radius: 4px; background: #0b66e1; color: #fff; display: flex; align-items: center; justify-content: center; gap: 6px; font-size: 13px; font-weight: 500; }

  main { flex: 1; min-width: 0; display: flex; flex-direction: column; }
  .toolbar { height: 49px; flex: none; background: #fff; border-bottom: 1px solid #e1e3e4; display: flex; align-items: center; padding: 0 8px 0 7px; }
  .tool { width: 32px; height: 32px; border-radius: 4px; background: #e6eff8; color: #0b66e1; display: grid; place-items: center; }
  .picker { width: 666px; height: 48px; border-right: 1px solid #e1e3e4; display: flex; align-items: center; justify-content: flex-end; padding-right: 20px; }
  .picker i { border: 4px solid transparent; border-top-color: #6f777b; border-bottom: 0; }
  .end { margin-left: auto; }
  .work { flex: 1; min-height: 0; display: flex; padding-left: 8px; }
  .map { position: relative; width: 806px; height: 674px; margin-top: 9px; border-radius: 4px; overflow: hidden; flex: none; }
  .tiles { display: block; }
  .places { fill: #3d4f80; font-family: Inter, sans-serif; font-weight: 600; letter-spacing: -0.1px; }
  .find, .info, .zoom, .switch { position: absolute; background: #fff; border-radius: 4px; box-shadow: 0 1px 3px rgba(0, 0, 0, 0.4); }
  .find { left: 12px; top: 14px; width: 240px; height: 32px; display: flex; align-items: center; gap: 9px; padding-left: 10px; font-size: 13px; color: #858b8e; box-shadow: 0 1px 3px rgba(0, 0, 0, 0.7); }
  .find .ic { color: #555b5e; }
  .info, .switch { width: 32px; height: 32px; display: grid; place-items: center; }
  .info { left: 750px; top: 24px; color: #5a6063; }
  .switch { left: 758px; top: 618px; color: #1c1f20; }
  .zoom { left: 24px; top: 542px; width: 36px; }
  .zoom span { height: 36px; display: grid; place-items: center; font-size: 12px; font-weight: 500; }
  .zoom .level { color: #6f777b; border: solid #d5d8d9; border-width: 1px 0; }
  .brand { position: absolute; left: 371px; top: 626px; height: 24px; display: flex; align-items: center; font-size: 11px; font-weight: 800; letter-spacing: 4.200px; color: #828282; }
  .brand i { width: 9px; height: 9px; border-radius: 50%; background: #7d7d7d; box-shadow: 0 0 0 8px rgba(120, 120, 120, 0.25); margin-left: -1px; }
  .credit { position: absolute; right: 8px; bottom: 7px; padding: 0 6px; font-size: 9px; line-height: 16px; font-weight: 500; letter-spacing: 0.25px; background: rgba(255, 255, 255, 0.3); white-space: nowrap; }

  .widgets { width: 300px; flex: none; padding-left: 9px; overflow: hidden; }
  .widgets .card { width: 284px; margin-bottom: 8px; padding: 16px; }
  .widgets .total { height: 56px; margin-top: -1px; padding-top: 6px; font-size: 24px; line-height: 32px; font-weight: 500; letter-spacing: 0.400px; }
  .widgets .cats { height: 345px; }
  .widgets .hist { height: 320px; padding-right: 0; }
  .wtitle { display: flex; }
  .wtitle h2 { width: 229px; flex: none; }
  .cats .wtitle .ic, .hist .wtitle .ic { margin-top: 4px; }
  .hist h2 { white-space: nowrap; }
  .widgets p { font-size: 11px; line-height: 16px; font-weight: 500; margin: 7px 0 13px; letter-spacing: 0.25px; }
  .cat { width: 241px; height: 32.350px; font-size: 13px; line-height: 18px; letter-spacing: 0.23px; }
  .cat > div:first-child { display: flex; justify-content: space-between; height: 21px; }
  .cat b { font-weight: 600; }
  .track { height: 4px; border-radius: 2px; background: #e1e3e4; }
  .track i { display: block; height: 4px; border-radius: 2px; background: #47db99; }
  .other .track i { background: #a5a7a8; }
  .searchin { display: flex; align-items: center; gap: 7px; margin: 11px 0 0 9px; font-size: 12px; font-weight: 500; color: #0b66e1; white-space: nowrap; }
  .hist svg { display: block; }
  .hist > svg { margin: 4px 0 0 1px; }
  .widgets .hist p { margin-bottom: 10px; }
  .max, .axis { font-family: 'Open Sans', sans-serif; font-size: 10px; line-height: 16px; color: #8e9395; }
  .max { padding-left: 1px; }
  .axis { display: flex; width: 249px; margin-top: 3px; padding-left: 1px; text-align: center; letter-spacing: 0.25px; }
  .axis span { width: 49.400px; flex: none; }
  .axis span:first-child { width: 24px; text-align: left; }
  .axis span:last-child { flex: 1; width: auto; text-align: right; }
  .scroll { width: 5px; height: 620px; margin: 47px 0 0; background: #cdcfd0; border-radius: 3px; }

  .overlay { position: fixed; inset: 0; background: rgba(0, 0, 0, 0.46); padding-top: 19px; }
  .dialog { width: 560px; height: 706px; margin: 0 auto; position: relative; left: -2px; background: #fff; border-radius: 4px; box-shadow: 0 11px 15px -7px rgba(0, 0, 0, 0.2), 0 24px 38px 3px rgba(0, 0, 0, 0.14), 0 9px 46px 8px rgba(0, 0, 0, 0.12); padding: 0 16px; }
  .dtitle { height: 72px; display: flex; align-items: center; justify-content: space-between; padding: 0 2px 0 7.500px; }
  .dtitle .ic { color: #7d8183; }
  .acc { display: flex; align-items: center; padding: 0 8px 0 16px; }
  .acc h3 { flex: 1; margin-left: 15.500px; letter-spacing: 0.2px; }
  .first { height: 64px; }
  .scroller { height: 434px; border: solid #e1e3e4; border-width: 1px 0; display: flex; justify-content: space-between; overflow: hidden; }
  .content { width: 491px; margin-left: 16px; background: #f8f9f9; padding: 0 24px; }
  .prev { height: 13px; background: #fff; border: 1px solid #e1e3e4; border-top: 0; border-radius: 0 0 4px 4px; margin-bottom: 16px; }
  .option { height: 82px; background: #fff; border: 1px solid #e1e3e4; border-radius: 4px; display: flex; align-items: center; padding: 0 20px 0 16px; }
  .bubble { width: 48px; height: 48px; border-radius: 50%; background: #edfcf5; color: #47db99; display: grid; place-items: center; margin-right: 12px; }
  .option > div { flex: 1; }
  .option strong { display: block; font-size: 15px; font-weight: 400; line-height: 22px; letter-spacing: 0.15px; margin-top: 1px; }
  .option small { display: block; font-size: 13px; line-height: 20px; color: #868b8d; white-space: nowrap; margin-top: -1px; }
  .radio { width: 16px; height: 16px; border: 2px solid #0f6ae0; border-radius: 50%; display: grid; place-items: center; }
  .radio i { width: 8px; height: 8px; border-radius: 50%; background: #0f6ae0; }
  .panel { height: 317px; margin-top: -1px; background: #fff; border: 1px solid #e1e3e4; border-radius: 0 0 4px 4px; }
  .ptabs { height: 49px; border-bottom: 1px solid #e1e3e4; display: flex; justify-content: center; font-size: 13px; font-weight: 500; }
  .ptabs span { padding: 0 16px; line-height: 50px; border-bottom: 4px solid transparent; height: 48px; white-space: nowrap; }
  .ptabs .on { color: #0f6ae0; border-color: #0f6ae0; }
  .pbody { padding: 0 24px; }
  .protect { height: 73px; padding: 7px 0 0 24px; border-bottom: 1px solid #e1e3e4; display: flex; align-items: center; gap: 8px; font-size: 11px; font-weight: 500; }
  .protect span:last-child { margin-top: -2px; }
  .toggle { width: 24px; height: 16px; border: 1px solid #7d8589; border-radius: 8px; padding: 3px; }
  .toggle i { display: block; width: 8px; height: 8px; border-radius: 50%; background: #7d8589; }
  .actions { display: flex; align-items: center; justify-content: space-between; padding: 16px 4px 20px 0; }
  .copy { width: 195px; height: 34px; border: 2px solid #0f6ae0; border-radius: 4px; background: #fff; color: #0f6ae0; display: flex; align-items: center; gap: 6px; padding-left: 11px; font-size: 13px; font-weight: 500; white-space: nowrap; }
  .social { display: flex; gap: 12px; color: #7d8183; }
  label { display: block; font-size: 11px; line-height: 19px; font-weight: 500; }
  .input { height: 32px; border: 1px solid #bfc2c4; border-radius: 4px; display: flex; align-items: center; justify-content: space-between; padding: 0 4px 0 11px; font-size: 13px; font-weight: 500; white-space: nowrap; letter-spacing: 0.04px; }
  .input b { width: 82px; height: 24px; flex: none; border-radius: 3px; background: #709f1d; color: #fff; display: flex; align-items: center; gap: 6px; padding-left: 4px; font-weight: 500; font-size: 12px; letter-spacing: 0.2px; }
  .pbody p { font-size: 11px; line-height: 16px; font-weight: 400; color: #868b8d; margin-top: 8px; letter-spacing: 0.22px; }
  .thumb { width: 5px; height: 291px; margin-top: 128px; border-radius: 3px; background: #e6e7e7; }
  .second { height: 84px; }
  .foot { display: flex; justify-content: flex-end; font-size: 13px; font-weight: 500; }
  .foot button { height: 36px; border-radius: 4px; font-size: 13px; font-weight: 500; }
  .cancel { width: 81px; background: none; color: #0f6ae0; }
  .save { width: 64px; background: #e4e6e6; color: #b4b9bb; }
</style>
